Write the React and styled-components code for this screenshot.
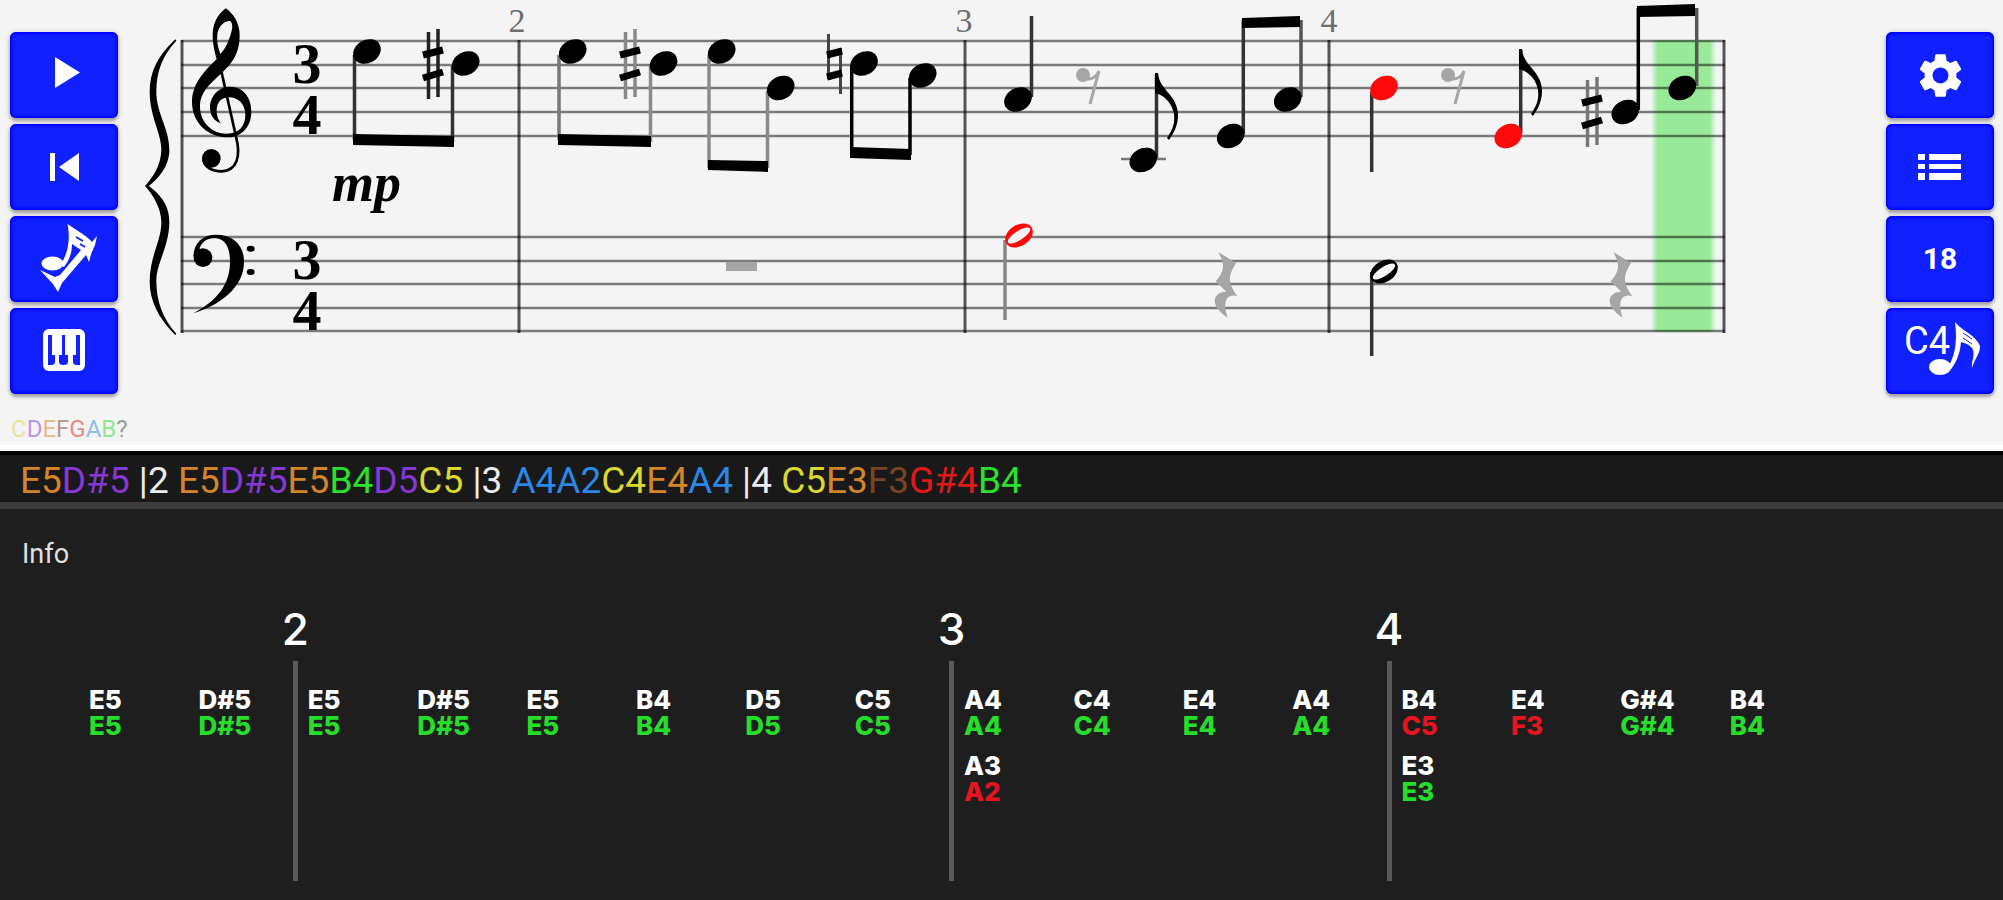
import React from "react";
import styled, { createGlobalStyle } from "styled-components";
import { MdSettings } from "react-icons/md";

const GlobalStyle = createGlobalStyle`
  *, *::before, *::after { box-sizing: border-box; }
  body { margin: 0; background: #1e1e1e; font-family: Roboto, sans-serif; }
`;

const NOTE_COLORS = {
  C: "#dcd832",
  D: "#8438d4",
  E: "#d4852a",
  F: "#7a4422",
  G: "#e01a1a",
  A: "#2b88e6",
  B: "#2ce02c",
};

const Page = styled.div`
  display: flex;
  flex-direction: column;
  min-height: 100vh;
  background: #1e1e1e;
`;

const ScoreSection = styled.section`
  display: flex;
  background: #f4f4f4;
  border-bottom: 6px solid #ffffff;
`;

const SideColumn = styled.aside`
  flex: none;
  display: flex;
  flex-direction: column;
  padding: ${({ $side }) => ($side === "left" ? "32px 0 2px 10px" : "32px 9px 2px 10px")};
  width: ${({ $side }) => ($side === "left" ? "130px" : "127px")};
`;

const ButtonStack = styled.div`
  display: flex;
  flex-direction: column;
  gap: 6px;
`;

const ToolButton = styled.button`
  display: flex;
  align-items: center;
  justify-content: center;
  width: 108px;
  height: 86px;
  padding: 0;
  border: 0;
  border-radius: 6px;
  background: #1020ff;
  color: #ffffff;
  font: 700 30px/36px Roboto, sans-serif;
  box-shadow: inset 0 0 3px 2px #0000ff, 0 3px 3px rgba(0, 0, 0, 0.25),
    0 1px 6px rgba(0, 0, 0, 0.2);
  cursor: pointer;
`;

const ButtonArt = styled.svg`
  display: block;
  width: 108px;
  height: 86px;
  fill: currentColor;
`;

const ArtLabel = styled.text`
  font: 400 38px Roboto, sans-serif;
`;

const Legend = styled.div`
  display: flex;
  margin-top: 21px;
  padding-left: 1px;
  font-size: 24px;
  line-height: 28px;
  opacity: 0.5;
`;

const NoteText = styled.span`
  color: ${({ $note }) => NOTE_COLORS[$note] || "#444444"};
`;

const ScoreView = styled.div`
  flex: 1;
  min-width: 0;
`;

const ScoreSvg = styled.svg`
  display: block;
  width: 100%;
  height: auto;
`;

const TimeDigit = styled.text`
  font: 700 58px "Liberation Serif", serif;
  text-anchor: middle;
`;

const Dynamic = styled.text`
  font: italic 700 54px "Liberation Serif", serif;
`;

const BarNumber = styled.text`
  font: 400 34px "Liberation Serif", serif;
  text-anchor: middle;
  fill: #6e6e6e;
`;

const Transcript = styled.div`
  height: 58px;
  padding: 5px 20px 0;
  border-top: 4px solid #000000;
  border-bottom: 7px solid #3c3c3c;
  background: #191919;
  color: #ececec;
  font-size: 37px;
  line-height: 42px;
  white-space: pre;
  overflow: hidden;
`;

const Feedback = styled.section`
  flex: 1;
  padding: 29px 0 19px;
  color: #ffffff;
`;

const InfoLabel = styled.h2`
  margin: 0 0 32px;
  padding-left: 22px;
  color: #e0e0e0;
  font-size: 27px;
  line-height: 32px;
  font-weight: 400;
`;

const Timeline = styled.div`
  display: grid;
  grid-template-columns: repeat(16, minmax(0, 1fr));
  padding: 0 179px 0 74px;
  font-family: Inter, sans-serif;
`;

const Beat = styled.div`
  display: flex;
  flex-direction: column;
`;

const MeasureNumber = styled.div`
  display: flex;
  justify-content: center;
  width: 5px;
  height: 56px;
  margin-bottom: 3px;
  font-size: 44px;
  line-height: 54px;
  font-weight: 500;
`;

const BeatBody = styled.div`
  display: flex;
  flex-direction: column;
  gap: 14px;
  height: 220px;
  padding: 26px 0 0 10px;
  border-left: 5px solid ${({ $measure }) => ($measure ? "#5a5a5a" : "transparent")};
`;

const NotePair = styled.div`
  display: flex;
  flex-direction: column;
  font-size: 26px;
  line-height: 26px;
  font-weight: 800;
`;

const Played = styled.span`
  color: ${({ $ok }) => ($ok ? "#26dd2c" : "#e61420")};
`;

/* ---- toolbar artwork ---- */

const PlayIcon = () => (
  <ButtonArt viewBox="0 0 108 86">
    <path d="M45 25v31l25-15.500z" />
  </ButtonArt>
);

const RestartIcon = () => (
  <ButtonArt viewBox="0 0 108 86">
    <path d="M40 29h5v28h-5zM69 29v28L49 43z" />
  </ButtonArt>
);

const SingingNoteIcon = () => (
  <ButtonArt viewBox="0 0 108 86">
    <ellipse cx="42.500" cy="47.500" rx="11" ry="7" />
    <path d="M50 49C57 40 61 25 57.500 8L68 15C74 19 79 22 82 26L87 20L85 29C83 34 81 37 79 46L76 39L52 67L48 76L43 68L30 54L45 61L50 59L71 34L62 28C62 37 59 45 54 51Z" />
    <path d="M66 21l7 4M70 28l5 3" stroke="#1020ff" strokeWidth="2" />
  </ButtonArt>
);

const PianoIcon = () => (
  <ButtonArt viewBox="0 0 108 86">
    <rect x="33" y="21" width="42" height="42" rx="6" />
    <path
      fill="#1020ff"
      d="M38 27h4v20h3v7q0 3-4 3h-3zM52 27h3v20h3v7q0 3-4.500 3t-4.500-3v-7h3zM70 27h-4v20h-3v7q0 3 4 3h3z"
    />
  </ButtonArt>
);

const ListIcon = () => (
  <ButtonArt viewBox="0 0 108 86">
    <path d="M32 30h7v6h-7zM32 40h7v5h-7zM32 49h7v7h-7zM43 30h32v6H43zM43 40h32v5H43zM43 49h32v7H43z" />
  </ButtonArt>
);

const NoteNameIcon = () => (
  <ButtonArt viewBox="0 0 108 86">
    <ArtLabel x="18" y="46">
      C4
    </ArtLabel>
    <ellipse cx="54" cy="59" rx="11" ry="8" />
    <path d="M60 61C68 52 72 36 69 14C76 23 90 27 94 38C94 46 89 50 86 60C85 53 90 46 86 40C83 36 78 35 75 34C74 46 70 56 62 65Z" />
    <path d="M77 25l9 6M77 30l9 6" stroke="#1020ff" strokeWidth="1" />
  </ButtonArt>
);

/* ---- music notation ---- */

const TREBLE_LINES = [41, 65, 88, 112, 136];
const BASS_LINES = [237, 261, 284, 308, 331];
const BAR_LINES = [182, 519, 965, 1329, 1724];
const BAR_NUMBERS = [
  ["2", 517],
  ["3", 964],
  ["4", 1329],
];

const HEADS = [
  [367, 51.5], [465.7, 63.5], [572.7, 51.5], [663.5, 63.5], [721.7, 51.5],
  [780.7, 88], [864, 63.5], [922.7, 75.5], [1018, 99.5], [1143.3, 160],
  [1230.7, 136], [1287.7, 99.5], [1384, 88, "#ff0a0a"], [1508.3, 136, "#ff0a0a"],
  [1625.3, 112], [1682.3, 88],
];

const STEMS = [
  [354.5, 55, 140], [452.5, 66, 142], [559, 55, 140, "#777777"], [650.5, 66, 142, "#8a8a8a"],
  [709, 55, 168, "#8a8a8a"], [767.5, 91, 168, "#8a8a8a"], [851.7, 66, 155, "#000000"], [910, 78, 155, "#000000"],
  [1031.5, 16, 97], [1156.5, 74, 158], [1243.3, 20, 134], [1301, 20, 97, "#555555"],
  [1371.7, 92, 172], [1520.7, 50, 133], [1638.3, 8, 110, "#000000"], [1696.7, 8, 86, "#555555"],
  [1005, 240, 320, "#888888"], [1371.7, 272, 356],
];

const BEAMS = [
  "353,134 454,136 454,147 353,145",
  "558,134 651,136 651,147 558,145",
  "708,160 768,161 768,172 708,170",
  "850,147 911,149 911,160 850,158",
  "1242,18 1300,16 1300,27 1242,28",
  "1637,6 1695,4 1695,16 1637,17",
];

const SHARPS = [
  [433, 64, "#222222"],
  [630, 64, "#888888"],
  [1592, 112, "#777777"],
];

const NoteHead = ({ x, y, color = "#000000" }) => (
  <ellipse cx={x} cy={y} rx="14.5" ry="11.5" fill={color} transform={`rotate(-30 ${x} ${y})`} />
);

const HalfHead = ({ x, y, color = "#000000" }) => (
  <g transform={`translate(${x} ${y}) rotate(-33)`}>
    <ellipse rx="15" ry="10.5" fill={color} />
    <ellipse rx="13" ry="4.5" fill="#f4f4f4" />
  </g>
);

const Sharp = ({ x, y, color }) => (
  <g transform={`translate(${x} ${y})`}>
    <path d="M-4.500 -32V35M5 -35V33" stroke={color} strokeWidth="3.500" />
    <path d="M-10 -9L10 -14M-10 14L10 8" stroke="#000000" strokeWidth="7" />
  </g>
);

const EighthRest = ({ x }) => (
  <g transform={`translate(${x} 75)`}>
    <circle r="7" fill="#a6a6a6" />
    <path d="M3 4Q12 5 16 -4L7 29" fill="none" stroke="#a6a6a6" strokeWidth="3" />
  </g>
);

const QuarterRest = ({ x }) => (
  <path
    transform={`translate(${x} 252) scale(0.3333)`}
    d="M-20 0L33 33C8 75 8 90 37 133C8 122 -10 145 8 197C-48 162 -38 120 4 119L-28 88C0 55 0 38 -20 0Z"
    fill="#a6a6a6"
  />
);

const Flag = ({ x, y }) => (
  <path
    transform={`translate(${x} ${y})`}
    d="M-1 0H2C3 17 22 22 22 42C22 52 18 60 13 67L11 65C17 56 19 50 18 41C16 30 8 22 -1 20Z"
  />
);

const Score = () => (
  <ScoreSvg viewBox="130 0 1746 445" role="img" aria-label="Sheet music, measures 1 to 4">
    <defs>
      <linearGradient id="cursor">
        <stop offset="0" stopColor="#98ea98" stopOpacity="0" />
        <stop offset="0.1" stopColor="#98ea98" />
        <stop offset="0.9" stopColor="#98ea98" />
        <stop offset="1" stopColor="#98ea98" stopOpacity="0" />
      </linearGradient>
    </defs>
    <rect x="1651" y="40" width="65" height="292" fill="url(#cursor)" />
    <g stroke="#000000" strokeOpacity="0.5" strokeWidth="2.500">
      {[...TREBLE_LINES, ...BASS_LINES].map((y) => (
        <path key={y} d={`M181 ${y}H1725`} />
      ))}
    </g>
    <g stroke="#000000" strokeOpacity="0.65" strokeWidth="3">
      {BAR_LINES.map((x) => (
        <path key={x} d={`M${x} 40V333`} />
      ))}
    </g>
    {BAR_NUMBERS.map(([n, x]) => (
      <BarNumber key={n} x={x} y="32">
        {n}
      </BarNumber>
    ))}
    <g transform="scale(0.33333)">
      <path d="M526 118C475 165 449 215 449 275C449 350 485 400 484 450C483 500 455 535 435 558C455 580 483 620 484 665C485 720 449 770 449 845C449 900 475 955 526 1005L529 1001C488 955 470 905 469 845C468 790 508 740 508 665C508 610 475 580 447 558C475 535 508 500 508 450C508 385 469 340 469 275C469 215 488 165 529 122Z" />
      <path
        fillRule="evenodd"
        d="M677 25C650 45 638 75 638 105C638 135 645 158 650 178C610 215 576 255 576 305C576 370 625 412 685 412C730 410 754 375 754 335C754 290 728 260 690 260C655 260 630 290 630 322C630 347 643 364 662 370C655 357 649 347 650 330C651 305 665 292 690 292C718 294 736 315 736 345C736 380 715 401 680 401C635 401 600 365 600 320C600 275 630 252 672 212C705 180 719 150 719 105C719 70 700 40 677 25ZM690 62C698 70 698 80 695 92C688 120 678 145 661 162C653 140 650 125 652 103C655 80 670 64 690 62Z"
      />
      <path
        d="M656 178L708 410C724 470 710 512 665 514C635 514 612 500 610 478"
        fill="none"
        stroke="#000000"
        strokeWidth="8"
      />
      <circle cx="634" cy="475" r="28" />
      <path d="M580 770C582 725 610 704 648 704C700 704 732 735 732 785C732 850 680 908 580 940C655 900 690 850 690 785C690 740 675 716 645 714C618 714 600 730 598 752Z" />
      <circle cx="609" cy="773" r="28" />
      <ellipse cx="752" cy="746" rx="12" ry="9" />
      <ellipse cx="752" cy="816" rx="12" ry="9" />
    </g>
    <TimeDigit x="307" y="83">3</TimeDigit>
    <TimeDigit x="307" y="134">4</TimeDigit>
    <TimeDigit x="307" y="279">3</TimeDigit>
    <TimeDigit x="307" y="330">4</TimeDigit>
    <Dynamic x="332" y="201">mp</Dynamic>

    {STEMS.map(([x, y1, y2, color = "#333333"]) => (
      <path key={`${x}-${y1}`} d={`M${x} ${y1}V${y2}`} stroke={color} strokeWidth="3.500" />
    ))}
    {BEAMS.map((points) => (
      <polygon key={points} points={points} />
    ))}
    <path d="M1121 159H1166" stroke="#777777" strokeWidth="2.500" />
    {HEADS.map(([x, y, color]) => (
      <NoteHead key={x} x={x} y={y} color={color} />
    ))}
    {SHARPS.map(([x, y, color]) => (
      <Sharp key={x} x={x} y={y} color={color} />
    ))}
    <path d="M828.500 34V79M840.500 48V94" stroke="#444444" strokeWidth="3" />
    <path d="M827 55L842 51M827 77L842 73" stroke="#000000" strokeWidth="7" />
    <HalfHead x={1019} y={235.5} color="#ff0a0a" />
    <HalfHead x={1384} y={271.5} />
    <Flag x={1156} y={73} />
    <Flag x={1520} y={49} />
    <EighthRest x={1083} />
    <EighthRest x={1448} />
    <QuarterRest x={1225} />
    <QuarterRest x={1620} />
    <rect x="726" y="262" width="31" height="9" fill="#a6a6a6" />
  </ScoreSvg>
);

const TRANSCRIPT = [
  "E5", "D#5", " |2 ", "E5", "D#5", "E5", "B4", "D5", "C5", " |3 ", "A4", "A2",
  "C4", "E4", "A4", " |4 ", "C5", "E3", "F3", "G#4", "B4",
];

const BEATS = [
  { notes: [["E5", "E5"]] },
  { notes: [["D#5", "D#5"]] },
  { measure: 2, notes: [["E5", "E5"]] },
  { notes: [["D#5", "D#5"]] },
  { notes: [["E5", "E5"]] },
  { notes: [["B4", "B4"]] },
  { notes: [["D5", "D5"]] },
  { notes: [["C5", "C5"]] },
  { measure: 3, notes: [["A4", "A4"], ["A3", "A2"]] },
  { notes: [["C4", "C4"]] },
  { notes: [["E4", "E4"]] },
  { notes: [["A4", "A4"]] },
  { measure: 4, notes: [["B4", "C5"], ["E3", "E3"]] },
  { notes: [["E4", "F3"]] },
  { notes: [["G#4", "G#4"]] },
  { notes: [["B4", "B4"]] },
];

export default function App() {
  return (
    <Page>
      <GlobalStyle />
      <ScoreSection>
        <SideColumn $side="left">
          <ButtonStack>
            <ToolButton aria-label="Play"><PlayIcon /></ToolButton>
            <ToolButton aria-label="Back to start"><RestartIcon /></ToolButton>
            <ToolButton aria-label="Check notes"><SingingNoteIcon /></ToolButton>
            <ToolButton aria-label="Keyboard"><PianoIcon /></ToolButton>
          </ButtonStack>
          <Legend>
            {[..."CDEFGAB?"].map((n) => (
              <NoteText key={n} $note={n}>{n}</NoteText>
            ))}
          </Legend>
        </SideColumn>
        <ScoreView>
          <Score />
        </ScoreView>
        <SideColumn $side="right">
          <ButtonStack>
            <ToolButton aria-label="Settings"><MdSettings size={53} /></ToolButton>
            <ToolButton aria-label="List"><ListIcon /></ToolButton>
            <ToolButton>18</ToolButton>
            <ToolButton aria-label="Note names"><NoteNameIcon /></ToolButton>
          </ButtonStack>
        </SideColumn>
      </ScoreSection>

      <Transcript>
        {TRANSCRIPT.map((t, i) =>
          t.startsWith(" ") ? t : <NoteText key={i} $note={t[0]}>{t}</NoteText>
        )}
      </Transcript>

      <Feedback>
        <InfoLabel>Info</InfoLabel>
        <Timeline>
          {BEATS.map(({ measure, notes }, i) => (
            <Beat key={i}>
              <MeasureNumber>{measure}</MeasureNumber>
              <BeatBody $measure={measure}>
                {notes.map(([expected, played]) => (
                  <NotePair key={expected}>
                    <span>{expected}</span>
                    <Played $ok={expected === played}>{played}</Played>
                  </NotePair>
                ))}
              </BeatBody>
            </Beat>
          ))}
        </Timeline>
      </Feedback>
    </Page>
  );
}
